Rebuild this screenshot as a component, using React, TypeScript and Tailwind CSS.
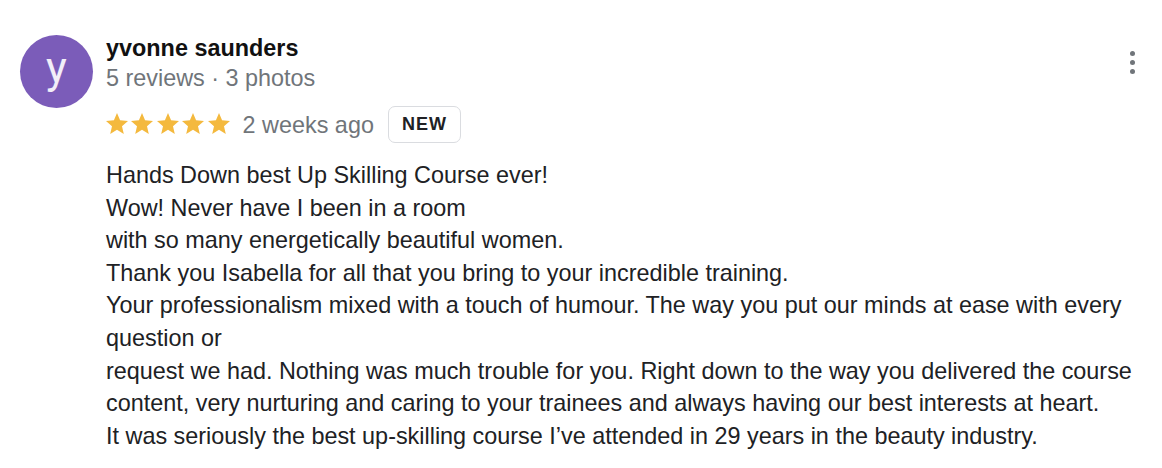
import React from "react";

const Star = () => (
  <svg width="22" height="21" viewBox="2 2 20 19" className="block">
    <path
      d="M12 17.27L18.18 21l-1.64-7.03L22 9.24l-7.19-.61L12 2 9.19 8.63 2 9.24l5.46 4.73L5.82 21z"
      fill="#f4b93e"
    />
  </svg>
);

export default function App() {
  const body = `Hands Down best Up Skilling Course ever!
Wow! Never have I been in a room
with so many energetically beautiful women.
Thank you Isabella for all that you bring to your incredible training.
Your professionalism mixed with a touch of humour. The way you put our minds at ease with every question or
request we had. Nothing was much trouble for you. Right down to the way you delivered the course content, very nurturing and caring to your trainees and always having our best interests at heart.
It was seriously the best up-skilling course I’ve attended in 29 years in the beauty industry.`;

  return (
    <div
      className="relative w-[1162px] h-[468px] bg-white overflow-hidden flex pt-[33px] pl-[20px] text-[#202124]"
      style={{ fontFamily: '"Liberation Sans", Arial, sans-serif' }}
    >
      <div className="mt-[2px] w-[73px] h-[73px] rounded-full bg-[#7b5cb9] flex items-center justify-center shrink-0">
        <span
          className="text-[44px] leading-none text-white/90 -translate-y-[4px]"
          style={{ fontFamily: "Roboto, sans-serif" }}
        >
          y
        </span>
      </div>
      <div className="ml-[13px] w-[1030px]">
        <div className="text-[23.4px] font-bold leading-[30px] text-[#111]">yvonne saunders</div>
        <div className="text-[23.4px] leading-[30px] text-[#70757a]">5 reviews · 3 photos</div>
        <div className="mt-[13px] flex items-center h-[37px]">
          <div className="flex gap-[3.4px] -mt-[3px]">
            <Star />
            <Star />
            <Star />
            <Star />
            <Star />
          </div>
          <span className="ml-[13px] text-[23.4px] text-[#70757a] leading-[30px]">2 weeks ago</span>
          <span className="ml-[14px] h-[37px] w-[73px] border border-[#dadce0] rounded-[7px] flex items-center justify-center text-[18px] font-bold tracking-[1px] text-[#202124]">
            NEW
          </span>
        </div>
        <div className="mt-[16px] text-[23.4px] leading-[32.6px] whitespace-pre-line">{body}</div>
      </div>
      <div className="absolute right-[27px] top-[51px] flex flex-col gap-[4px] items-center">
        <span className="w-[5px] h-[5px] rounded-full bg-[#70757a]" />
        <span className="w-[5px] h-[5px] rounded-full bg-[#70757a]" />
        <span className="w-[5px] h-[5px] rounded-full bg-[#70757a]" />
      </div>
    </div>
  );
}
